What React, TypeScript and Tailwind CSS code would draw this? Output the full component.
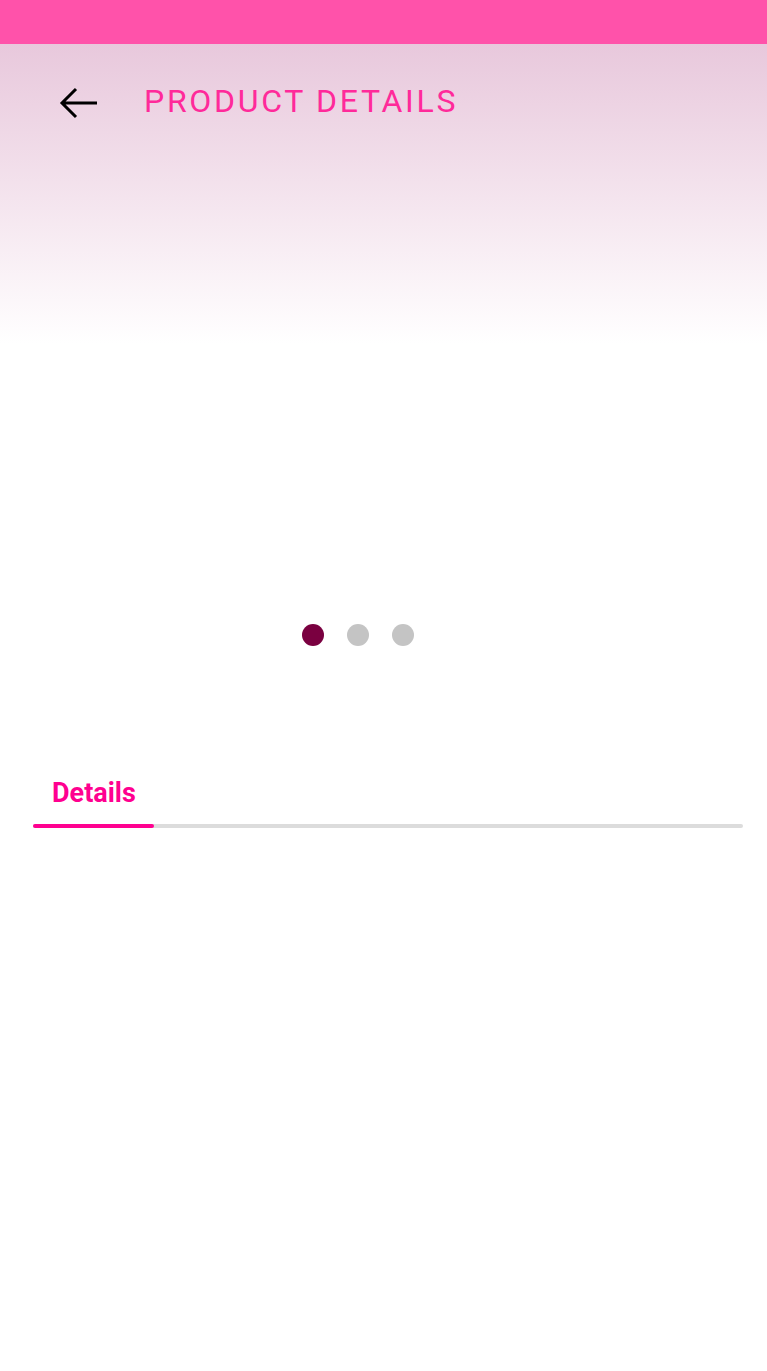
export default function App() {
  const dots = [true, false, false];

  return (
    <div className="w-[767px] h-[1371px] bg-white font-['Roboto',sans-serif] overflow-hidden">
      {/* status bar */}
      <div className="h-[44px] bg-[#FF52AA]" />

      {/* header gradient */}
      <div className="h-[300px] bg-gradient-to-b from-[#E8C8DC] to-white">
        <div className="flex items-center h-[118px] pl-[59px]">
          <svg width="40" height="34" viewBox="0 0 40 34" fill="none">
            <path d="M38 17H3M17 3L3 17L17 31" stroke="#000" strokeWidth="3" />
          </svg>
          <h1 className="ml-[45px] mb-[4px] text-[32px] font-normal tracking-[2.7px] text-[#FF2A9A] leading-none">
            PRODUCT DETAILS
          </h1>
        </div>
      </div>

      {/* carousel area */}
      <div className="h-[291px] flex items-end justify-center">
        <div className="flex gap-[23px] ml-[-52px] mb-[-11px]">
          {dots.map((active, i) => (
            <span
              key={i}
              className={`w-[22px] h-[22px] rounded-full ${active ? "bg-[#7A0040]" : "bg-[#C4C4C4]"}`}
            />
          ))}
        </div>
      </div>

      {/* tabs */}
      <div className="mt-[138px] px-[33px]">
        <div className="pl-[19px] h-[40px] flex items-center">
          <span className="text-[27px] font-bold text-[#FF0090]">Details</span>
        </div>
        <div className="mt-[11px] w-[710px] h-[4px] rounded-full bg-[#DCDCDC] flex">
          <div className="w-[121px] h-[4px] rounded-full bg-[#FF0090]" />
        </div>
      </div>
    </div>
  );
}
